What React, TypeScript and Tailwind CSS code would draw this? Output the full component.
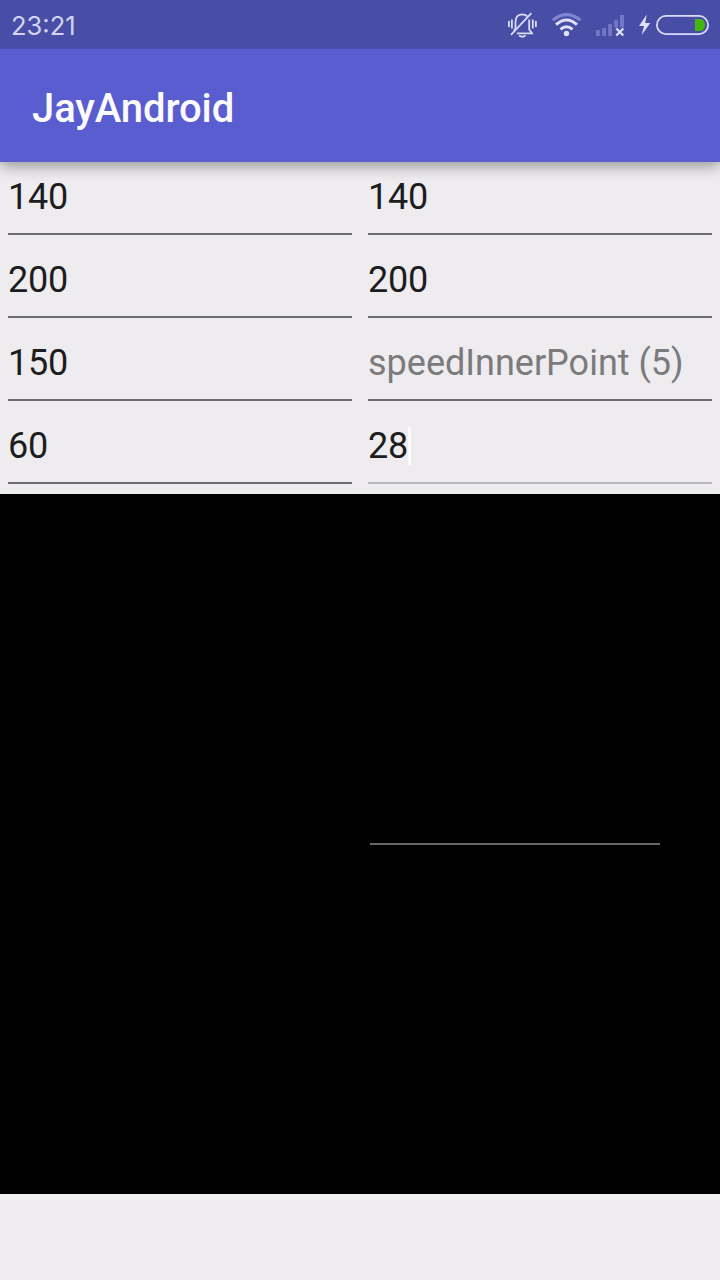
type Cell = { text: string; hint?: boolean; focused?: boolean };

const rows: Cell[][] = [
  [{ text: "140" }, { text: "140" }],
  [{ text: "200" }, { text: "200" }],
  [{ text: "150" }, { text: "speedInnerPoint (5)", hint: true }],
  [{ text: "60" }, { text: "28", focused: true }],
];

function StatusIcons() {
  return (
    <svg className="block h-[49px] w-[230px]" viewBox="490 0 230 49" fill="none">
      {/* muted bell */}
      <g stroke="#d9daf6" strokeWidth="1.8">
        <path d="M514 31 L515.5 28.5 V22 C515.5 17 518 14.5 522 14.3 C524.5 14.3 526.2 15 527.3 16.4" />
        <path d="M529.2 19.5 V29.5 L532 33.3 H516.8" />
        <path d="M511 34.8 L531.3 13.2" />
        <path d="M519 35.4 Q522.3 38 525.6 35.4" />
        <path d="M508.9 21 V27 M511.9 19.5 V28.5 M532.8 19.5 V28.5 M535.9 21 V27" />
      </g>
      {/* wifi */}
      <path d="M552.8 20.2 Q566.5 9 580.4 20.2" stroke="#8386d2" strokeWidth="3" />
      <path d="M556 24.7 Q566.5 15.3 577 24.7 M560.5 29.4 Q566.5 24 572.5 29.4" stroke="#dfe0fa" strokeWidth="3" />
      <circle cx="566.5" cy="33.5" r="2.7" fill="#dfe0fa" />
      {/* mobile signal */}
      <path
        d="M596 30h3.8v6H596zM602.2 28h3.8v8h-3.8zM608.2 24h3.8v12h-3.8zM614.2 20h3.8v7.5h-3.8zM620 15h4v12.5h-4z"
        fill="#7477c5"
      />
      <path d="M616.3 28.5 L623.3 35.5 M623.3 28.5 L616.3 35.5" stroke="#dfe0fa" strokeWidth="2.3" />
      {/* charging battery */}
      <path d="M646.7 14.5 L639 26 H644 L641.7 35 L650.3 23 H645.2 Z" fill="#dfe0fa" />
      <rect x="656.9" y="15.9" width="51.2" height="18.2" rx="9.1" stroke="#d9daf6" strokeWidth="1.8" />
      <path d="M695 19 H700 Q705 19.5 705 25 Q705 30.5 700 31 H695 Z" fill="#45b60b" />
    </svg>
  );
}

function Field({ text, hint, focused }: Cell) {
  return (
    <div className="flex h-[83px] flex-1 flex-col justify-between px-2 pt-[14px] pb-[10px]">
      <div
        className={`flex h-[42px] items-center text-[36px] leading-[42px] whitespace-nowrap ${
          hint ? "text-[#7b7a7c]" : "tracking-[-0.25px] text-[#1d1c1e]"
        }`}
      >
        <span>{text}</span>
        {focused && <span className="h-[38px] w-[3px] bg-[#fbfafc]" />}
      </div>
      <div className={`h-[2px] ${focused ? "bg-[#b7b6b8]" : "bg-[#6d6c6e]"}`} />
    </div>
  );
}

export default function App() {
  return (
    <div className="flex h-[1280px] w-[720px] flex-col overflow-hidden bg-[#eeecef] font-['Roboto',sans-serif]">
      <header className="relative z-10 shrink-0 shadow-[0_4px_14px_rgba(0,0,0,0.38)]">
        <div className="flex h-[49px] items-start justify-between bg-[#484da6] pl-[11px]">
          <span className="pt-[10px] font-['Inter',sans-serif] text-[25.5px] leading-8 text-[#d3d4f3]">
            23:21
          </span>
          <StatusIcons />
        </div>
        <div className="flex h-[113px] items-center bg-[#5a5dcf] px-8 pt-[7px]">
          <h1 className="text-[40px] leading-[48px] font-medium tracking-[-0.1px] text-[#fafaff]">JayAndroid</h1>
        </div>
      </header>
      <section className="shrink-0">
        {rows.map((row, i) => (
          <div key={i} className="flex">
            {row.map((cell, j) => (
              <Field key={j} {...cell} />
            ))}
          </div>
        ))}
      </section>
      <main className="h-[700px] shrink-0 bg-black pt-[349px] pl-[370px]">
        <div className="h-[2px] w-[290px] bg-[#656665]" />
      </main>
      <div className="h-[6px] shrink-0 bg-[#f1f0f2]" />
    </div>
  );
}
